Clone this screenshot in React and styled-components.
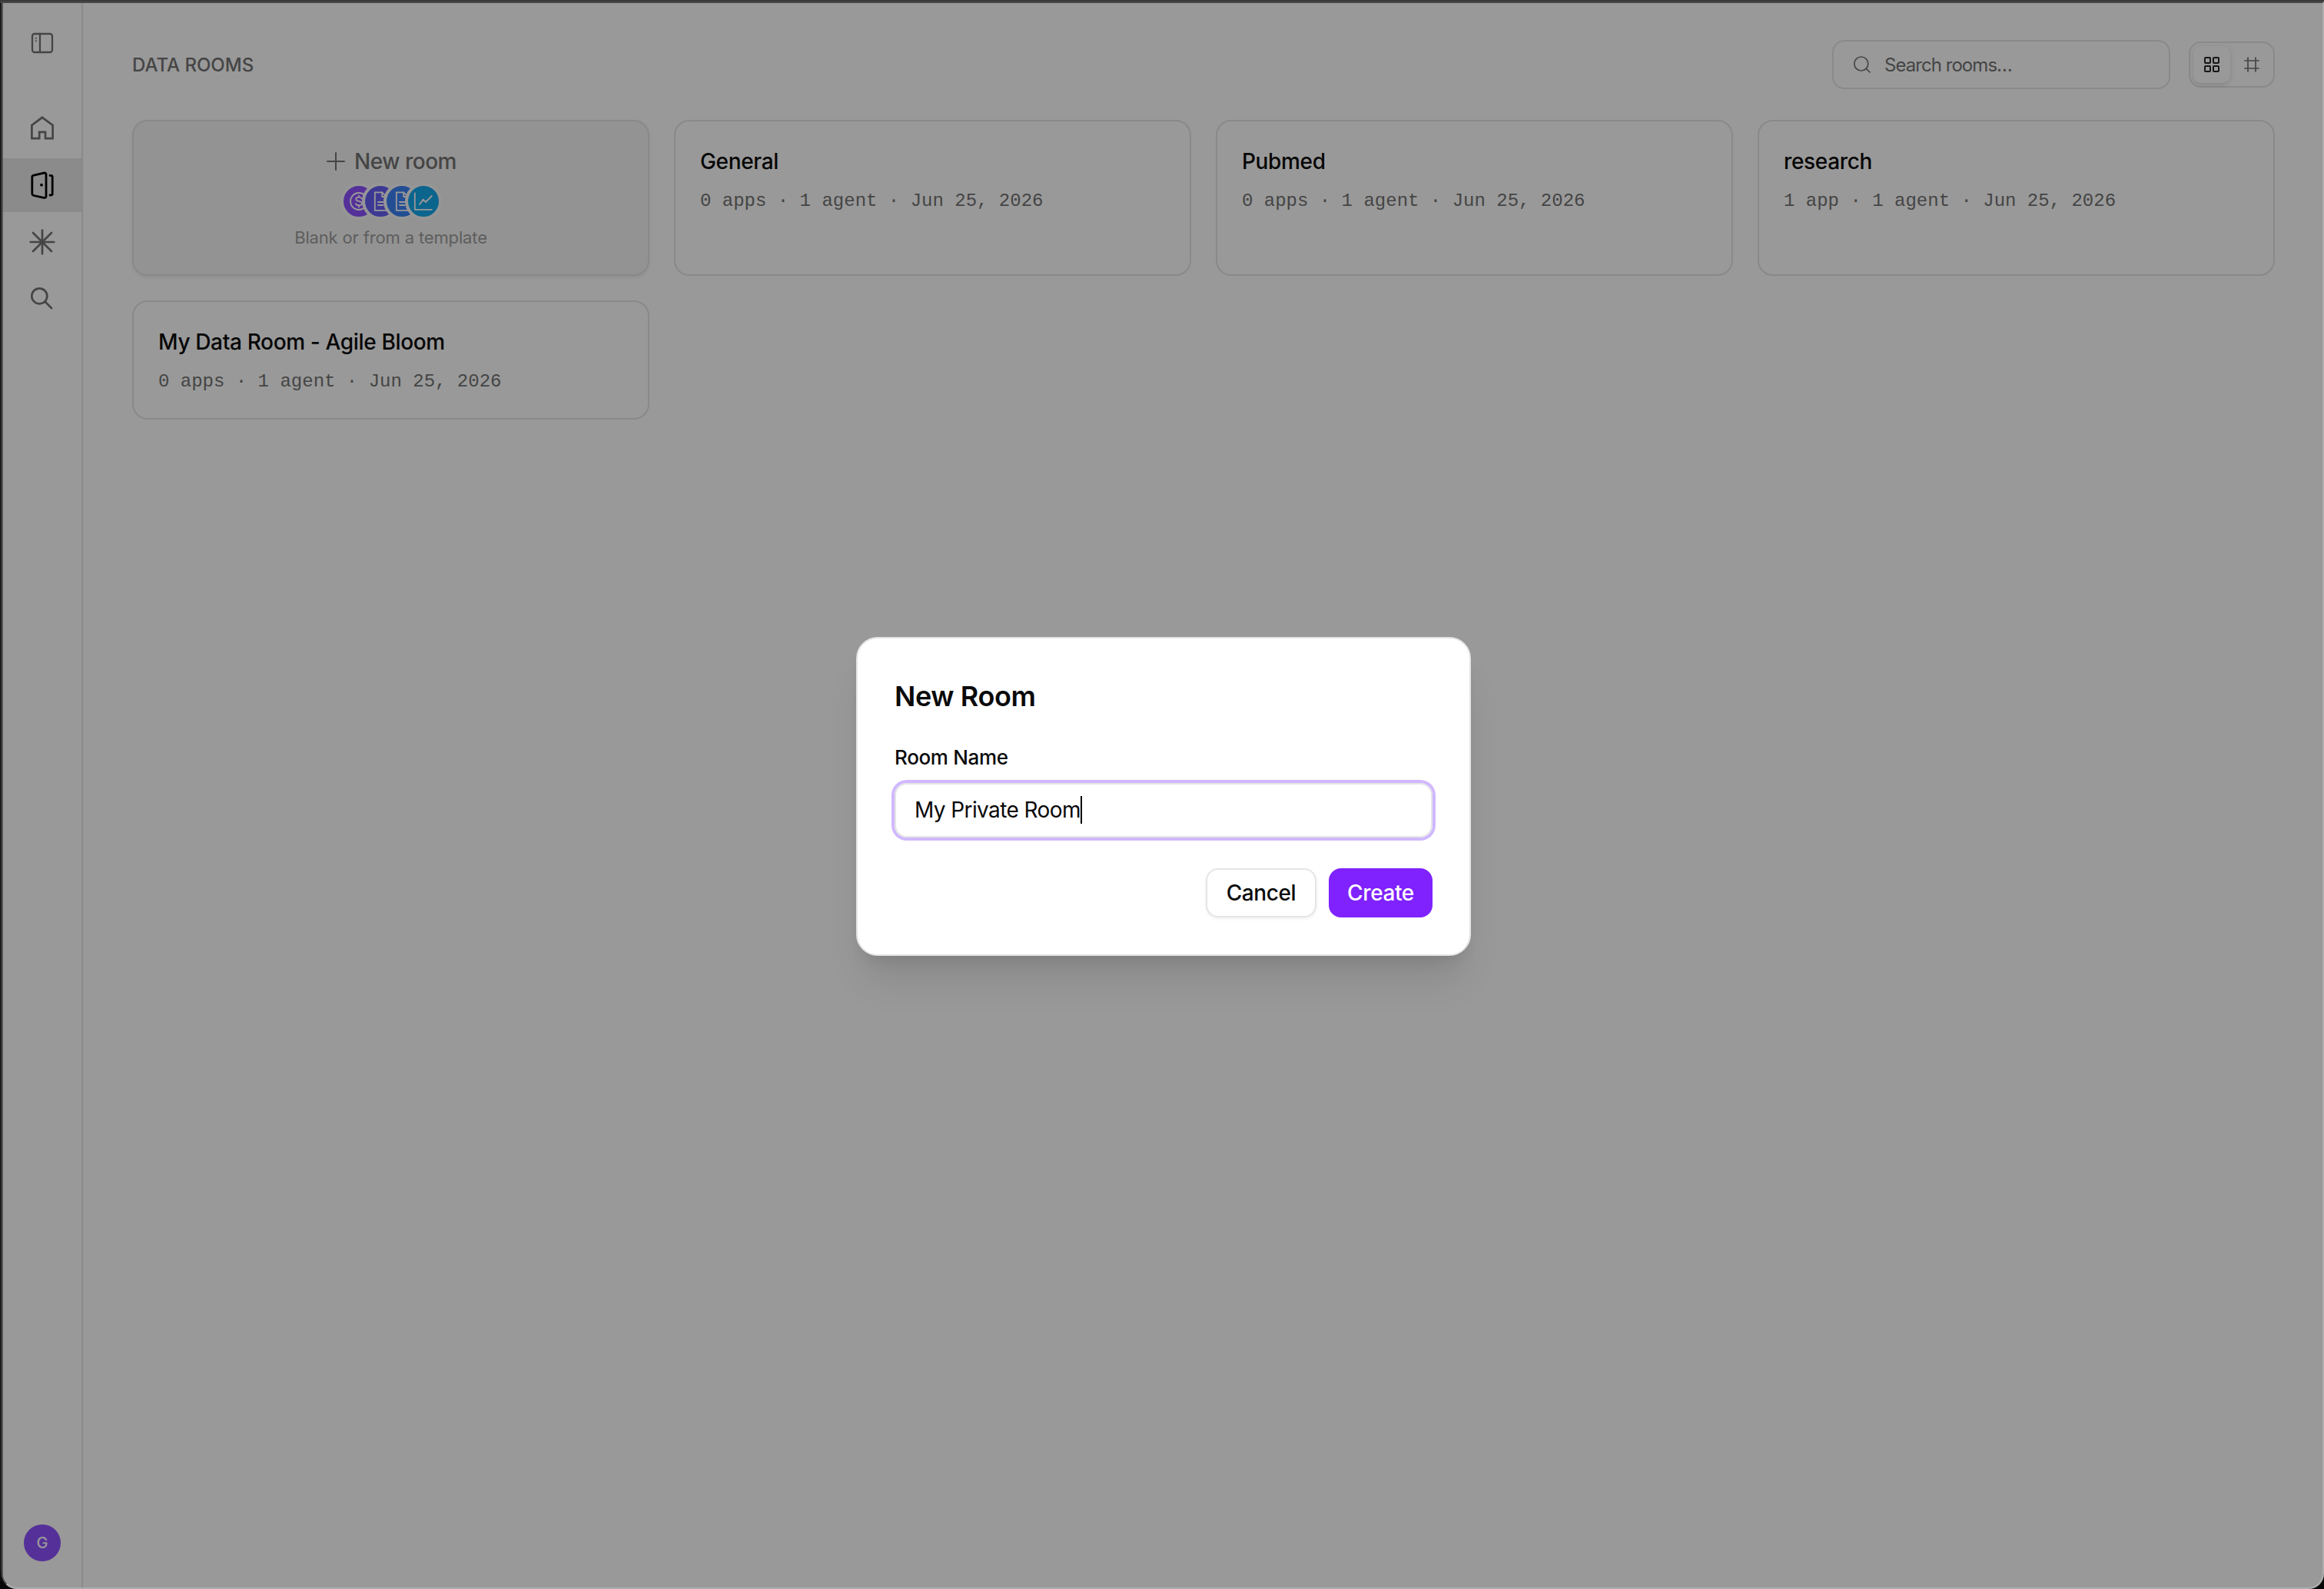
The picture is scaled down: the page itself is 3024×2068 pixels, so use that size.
// Packages
import React from "react"
import styled, { createGlobalStyle, css } from "styled-components"

const Colors = {
    White: "#ffffff",
    Black: "#0a0a0a",
    Gray: "#737373",
    LightGray: "#9d9d9d",
    Border: "#e5e5e5",
    Surface: "#f5f5f5",
    Active: "#e8e8e8",
    Primary: "#7f22fe",
}

const Fonts = {
    Body: `Inter, "Liberation Sans", sans-serif`,
    Mono: `"Liberation Mono", monospace`,
}

// Styles
const GlobalStyle = createGlobalStyle`
    * {
        box-sizing: border-box;
    }

    body {
        margin: 0;
        background: #0a0a0a;
        font-family: ${Fonts.Body};
        color: ${Colors.Black};
        -webkit-font-smoothing: antialiased;
    }

    button, input {
        font: inherit;
        color: inherit;
    }

    svg {
        display: block;
        flex-shrink: 0;
    }
`

const Desktop = styled.div`
    height: 100vh;
    padding: 2px 0 0 2px;
    background: linear-gradient(to bottom, #3a3a3a 4px, #1c1c1c 4px, #1c1c1c 2040px, #060808 2060px);
    overflow: hidden;
`

const Window = styled.div`
    position: relative;
    display: flex;
    height: 100%;
    background: ${Colors.White};
    border-style: solid;
    border-width: 2px;
    border-color: #484848 #adadad #adadad #555555;
    border-radius: 0 0 20px 20px;
    overflow: hidden;
`

const Sidebar = styled.aside`
    display: flex;
    flex-direction: column;
    width: 104px;
    flex-shrink: 0;
    border-right: 2px solid ${Colors.Border};
    padding-bottom: 34px;
`

const Nav = styled.nav`
    display: flex;
    flex-direction: column;
    gap: 4px;
    margin-top: 24px;
`

const NavItem = styled.a`
    display: flex;
    align-items: center;
    justify-content: center;
    height: 70px;
    color: ${({ $active }) => ($active ? "#000000" : Colors.Gray)};
    background: ${({ $active }) => ($active ? Colors.Active : "transparent")};
`

const PanelToggle = styled(NavItem)`
    height: 104px;
`

const Avatar = styled.div`
    display: flex;
    align-items: center;
    justify-content: center;
    width: 48px;
    height: 48px;
    margin: auto auto 0 27px;
    border-radius: 50%;
    background: #8e51ff;
    color: ${Colors.White};
    font-size: 20px;
    font-weight: 500;
`

const Main = styled.main`
    flex: 1;
    padding: 48px 62px 0 64px;
`

const Header = styled.header`
    display: flex;
    align-items: center;
    height: 64px;
    margin-bottom: 40px;
`

const PageTitle = styled.h1`
    flex: 1;
    margin: 0;
    font-size: 24px;
    font-weight: 500;
    letter-spacing: 0;
    color: ${Colors.Gray};
`

const SearchBox = styled.div`
    display: flex;
    align-items: center;
    gap: 18px;
    width: 440px;
    height: 64px;
    padding: 0 24px;
    border: 2px solid ${Colors.Border};
    border-radius: 16px;
    color: ${Colors.Gray};
    font-size: 24px;
    letter-spacing: -0.95px;
`

const Toggle = styled.div`
    display: flex;
    align-items: center;
    gap: 4px;
    height: 60px;
    margin-left: 24px;
    padding: 0 4px;
    border: 2px solid ${Colors.Border};
    border-radius: 16px;
`

const ToggleButton = styled.button`
    display: flex;
    align-items: center;
    justify-content: center;
    width: 48px;
    height: 48px;
    padding: 0;
    border: 0;
    border-radius: 10px;
    background: none;
    color: ${Colors.Gray};

    ${({ $active }) =>
        $active &&
        css`
            background: ${Colors.White};
            color: #262626;
            box-shadow: 0 2px 6px rgba(0, 0, 0, 0.14);
        `}
`

const Grid = styled.div`
    display: grid;
    grid-template-columns: repeat(4, 1fr);
    gap: 32px;
`

const Card = styled.article`
    display: flex;
    flex-direction: column;
    min-height: 155px;
    padding: 32px 32px 30px;
    border: 2px solid ${Colors.Border};
    border-radius: 20px;
    background: ${Colors.White};
`

const NewCard = styled(Card)`
    align-items: center;
    height: 203px;
    background: ${Colors.Surface};
    box-shadow: 0 2px 4px rgba(0, 0, 0, 0.08);
    color: ${Colors.Gray};
`

const CardTitle = styled.h2`
    display: flex;
    align-items: center;
    gap: 12px;
    margin: 0;
    font-size: 28px;
    line-height: 40px;
    font-weight: 500;
    letter-spacing: -0.35px;
`

const NewCardTitle = styled(CardTitle)`
    padding-left: 2px;
    letter-spacing: -0.5px;
`

const Meta = styled.p`
    margin: 16px 0 0;
    font-family: ${Fonts.Mono};
    font-size: 24px;
    line-height: 32px;
    color: ${Colors.Gray};
`

const Hint = styled.p`
    margin: 7px 0 0;
    font-size: 22px;
    line-height: 32px;
    letter-spacing: -0.15px;
    color: ${Colors.LightGray};
`

const Stack = styled.div`
    display: flex;
    margin-top: 8px;
`

const Template = styled.span`
    display: flex;
    align-items: center;
    justify-content: center;
    width: 48px;
    height: 48px;
    border: 4px solid #fbfbfb;
    border-radius: 50%;
    background: ${({ $color }) => $color};
    color: ${Colors.White};

    & + & {
        margin-left: -20px;
    }
`

const Overlay = styled.div`
    position: absolute;
    inset: 0;
    display: flex;
    align-items: center;
    justify-content: center;
    background: rgba(0, 0, 0, 0.4);
`

const Dialog = styled.form`
    display: flex;
    flex-direction: column;
    width: 800px;
    height: 415px;
    margin: 2px 0 0 2px;
    padding: 48px;
    border: 2px solid ${Colors.Border};
    border-radius: 28px;
    background: ${Colors.White};
    box-shadow:
        0 40px 50px -10px rgba(0, 0, 0, 0.1),
        0 16px 20px -12px rgba(0, 0, 0, 0.1);
`

const DialogTitle = styled.h2`
    margin: 0;
    font-size: 36px;
    line-height: 54px;
    font-weight: 600;
    letter-spacing: -0.4px;
`

const Label = styled.label`
    margin-top: 33px;
    font-size: 26px;
    line-height: 40px;
    font-weight: 500;
    letter-spacing: -0.35px;
`

const Field = styled.div`
    display: flex;
    align-items: center;
    height: 72px;
    margin-top: 13px;
    padding: 0 24px;
    border: 2px solid ${Colors.Border};
    border-radius: 16px;
    box-shadow: 0 0 0 4px #d0b8ff;
    font-size: 28px;
    letter-spacing: -0.6px;
`

const Caret = styled.span`
    width: 2px;
    height: 36px;
    background: #000000;
`

const Actions = styled.div`
    display: flex;
    justify-content: flex-end;
    gap: 16px;
    margin-top: 40px;
`

const Button = styled.button`
    width: ${({ $primary }) => ($primary ? "135px" : "144px")};
    height: 64px;
    padding: 0;
    border: 2px solid ${({ $primary }) => ($primary ? Colors.Primary : Colors.Border)};
    border-radius: 16px;
    background: ${({ $primary }) => ($primary ? Colors.Primary : Colors.White)};
    color: ${({ $primary }) => ($primary ? Colors.White : Colors.Black)};
    box-shadow: ${({ $primary }) => ($primary ? "none" : "0 2px 4px rgba(0, 0, 0, 0.06)")};
    font-size: 28px;
    font-weight: 500;
    letter-spacing: -0.4px;
`

// Icons
const Icon = ({ size = 36, stroke = 2.7, children }) => (
    <svg
        width={size}
        height={size}
        viewBox={`0 0 ${size} ${size}`}
        fill="none"
        stroke="currentColor"
        strokeWidth={stroke}
        strokeLinecap="round"
        strokeLinejoin="round"
    >
        {children}
    </svg>
)

const PanelIcon = () => (
    <Icon stroke={2.3}>
        <rect x="5" y="6" width="26" height="24" rx="3" />
        <path d="M15 6v24" />
        <path d="M9.8 11.4v.6M9.8 15v.6" stroke="#8a8a8a" strokeWidth="2" />
    </Icon>
)

const HomeIcon = () => (
    <Icon>
        <path d="M18 3.8 31.6 14V31.2H22V22.8H14.2V31.2H4.4V14Z" strokeLinejoin="miter" />
    </Icon>
)

const DoorIcon = () => (
    <Icon stroke={2.8}>
        <path d="M7 5.2 20 2.1q3-.6 3 2v28.4q0 2.4-3 1.8L7 31.5q-2.2-.6-2.2-2.4V7.500Q4.800 5.700 7 5.200Z" />
        <path d="M28 5.4h1q2.2 0 2.2 2V29q0 2-2.200 2h-1" />
        <circle cx="17" cy="17.700" r="1.900" fill="currentColor" stroke="none" />
    </Icon>
)

const AsteriskIcon = () => (
    <Icon>
        <path d="M18 2.7v30.600M2.700 18h30.600M6 6l24 24M30 6 6 30" />
    </Icon>
)

const SearchIcon = () => (
    <Icon>
        <circle cx="14.3" cy="14.3" r="10" />
        <path d="m21.8 21.8 8.2 8.2" />
    </Icon>
)

const SmallSearchIcon = () => (
    <Icon size={24} stroke={1.7}>
        <circle cx="11.8" cy="11" r="9" />
        <path d="m18.2 17.4 4.8 4.6" />
    </Icon>
)

const GridIcon = () => (
    <Icon size={24} stroke={2}>
        <rect x="3" y="3" width="7" height="7" rx="1" />
        <rect x="14" y="3" width="7" height="7" rx="1" />
        <rect x="3" y="14" width="7" height="7" rx="1" />
        <rect x="14" y="14" width="7" height="7" rx="1" />
    </Icon>
)

const HashIcon = () => (
    <Icon size={24} stroke={1.7}>
        <path d="M7 3v18M17 3v18M3 7h18M3 17h18" />
    </Icon>
)

const PlusIcon = () => (
    <Icon size={24} stroke={2}>
        <path d="M12 1v22M1 12h22" />
    </Icon>
)

const CoinIcon = () => (
    <Icon size={28} stroke={1.8}>
        <circle cx="14" cy="14" r="11" />
        <path d="M17.8 10.6c-.6-1.3-1.9-1.9-3.8-1.9-2.3 0-3.8.9-3.8 2.5 0 3.7 7.8 1.8 7.8 5.5 0 1.6-1.6 2.5-4 2.5-2.1 0-3.5-.8-4-2.1M14 6.6v2M14 19.4v2" />
    </Icon>
)

const FileIcon = () => (
    <Icon size={28} stroke={1.8}>
        <path d="M6.8 2.4h9.4L21.8 8v17.8h-15Z" strokeLinejoin="miter" />
        <path d="M16.2 2.4V8h5.6M11 15h6.4M11 19h6.4" />
    </Icon>
)

const ChartIcon = () => (
    <Icon size={28} stroke={1.8}>
        <path d="M2.8 3.4v21.4h22M9 18l4.6-6.4L17 15l7.8-8" />
    </Icon>
)

const templates = [
    { color: "#8e51ff", icon: <CoinIcon /> },
    { color: "#6660f6", icon: <FileIcon /> },
    { color: "#3b82f6", icon: <FileIcon /> },
    { color: "#14a8ec", icon: <ChartIcon /> },
]

const rooms = [
    { name: "General", meta: "0 apps · 1 agent · Jun 25, 2026" },
    { name: "Pubmed", meta: "0 apps · 1 agent · Jun 25, 2026" },
    { name: "research", meta: "1 app · 1 agent · Jun 25, 2026" },
    { name: "My Data Room - Agile Bloom", meta: "0 apps · 1 agent · Jun 25, 2026" },
]

function NewRoomDialog() {
    return (
        <Dialog>
            <DialogTitle>New Room</DialogTitle>
            <Label>Room Name</Label>
            <Field>
                My Private Room
                <Caret />
            </Field>
            <Actions>
                <Button type="button">Cancel</Button>
                <Button type="button" $primary>
                    Create
                </Button>
            </Actions>
        </Dialog>
    )
}

function App() {
    return (
        <Desktop>
            <GlobalStyle />

            <Window>
                <Sidebar>
                    <PanelToggle>
                        <PanelIcon />
                    </PanelToggle>

                    <Nav>
                        <NavItem>
                            <HomeIcon />
                        </NavItem>
                        <NavItem $active>
                            <DoorIcon />
                        </NavItem>
                        <NavItem>
                            <AsteriskIcon />
                        </NavItem>
                        <NavItem>
                            <SearchIcon />
                        </NavItem>
                    </Nav>

                    <Avatar>G</Avatar>
                </Sidebar>

                <Main>
                    <Header>
                        <PageTitle>DATA ROOMS</PageTitle>
                        <SearchBox>
                            <SmallSearchIcon />
                            Search rooms…
                        </SearchBox>
                        <Toggle>
                            <ToggleButton $active>
                                <GridIcon />
                            </ToggleButton>
                            <ToggleButton>
                                <HashIcon />
                            </ToggleButton>
                        </Toggle>
                    </Header>

                    <Grid>
                        <NewCard>
                            <NewCardTitle>
                                <PlusIcon />
                                New room
                            </NewCardTitle>
                            <Stack>
                                {templates.map(({ color, icon }) => (
                                    <Template key={color} $color={color}>
                                        {icon}
                                    </Template>
                                ))}
                            </Stack>
                            <Hint>Blank or from a template</Hint>
                        </NewCard>

                        {rooms.map(({ name, meta }) => (
                            <Card key={name}>
                                <CardTitle>{name}</CardTitle>
                                <Meta>{meta}</Meta>
                            </Card>
                        ))}
                    </Grid>
                </Main>

                <Overlay>
                    <NewRoomDialog />
                </Overlay>
            </Window>
        </Desktop>
    )
}

export default App
